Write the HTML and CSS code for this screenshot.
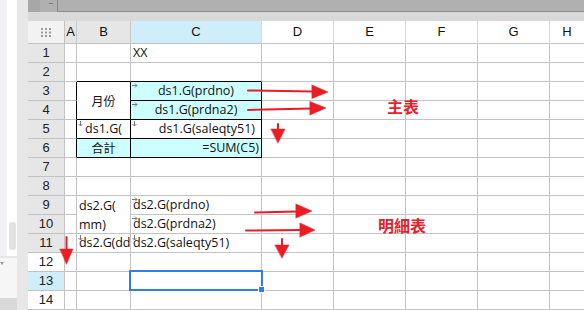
FILE: index.html
```html
<!DOCTYPE html>
<html lang="zh-TW">
<head>
    <meta charset="UTF-8">
    <title>報表設計</title>
    <link rel="stylesheet" href="styles.css">
</head>
<body>
<div class="app">
    <aside class="side">
        <div class="rail"></div>
        <div class="track"><div class="thumb"></div></div>
        <div class="gutter"></div>
        <div class="foot-line"></div>
        <div class="foot"><span class="foot-caret"></span></div>
        <div class="foot-bottom"></div>
    </aside>

    <main class="main">
        <div class="toolbar">
            <div class="tb-btn"></div>
            <div class="tb-gap"><span class="tb-tick"></span></div>
            <div class="tb-box"></div>
        </div>
        <div class="band"></div>

        <div class="sheet">
            <!-- column headers -->
            <div class="corner">
                <svg width="10" height="9" viewBox="0 0 10 9">
                    <g fill="#9b9b9b">
                        <rect x="0" y="0" width="2" height="2"/><rect x="4" y="0" width="2" height="2"/><rect x="8" y="0" width="2" height="2"/>
                        <rect x="0" y="3.5" width="2" height="2"/><rect x="4" y="3.5" width="2" height="2"/><rect x="8" y="3.5" width="2" height="2"/>
                        <rect x="0" y="7" width="2" height="2"/><rect x="4" y="7" width="2" height="2"/><rect x="8" y="7" width="2" height="2"/>
                    </g>
                </svg>
            </div>
            <div class="ch used">A</div>
            <div class="ch used">B</div>
            <div class="ch active">C</div>
            <div class="ch">D</div>
            <div class="ch">E</div>
            <div class="ch">F</div>
            <div class="ch">G</div>
            <div class="ch last">H</div>

            <!-- row 1 -->
            <div class="rh">1</div>
            <div class="c"></div>
            <div class="c"></div>
            <div class="c">XX</div>
            <div class="c"></div><div class="c"></div><div class="c"></div><div class="c"></div><div class="c last"></div>

            <!-- row 2 -->
            <div class="rh">2</div>
            <div class="c"></div>
            <div class="c bb"></div>
            <div class="c bb"></div>
            <div class="c"></div><div class="c"></div><div class="c"></div><div class="c"></div><div class="c last"></div>

            <!-- row 3 -->
            <div class="rh">3</div>
            <div class="c br"></div>
            <div class="c blk ctr span2 cjk">月份</div>
            <div class="c blk cyan ctr">
                <svg class="mk" width="6" height="5" viewBox="0 0 6 5"><path d="M0 2.5H5M3 0.5L5 2.5L3 4.5" fill="none" stroke="#7a7a7a"/></svg>
                ds1.G(prdno)
            </div>
            <div class="c"></div><div class="c"></div><div class="c"></div><div class="c"></div><div class="c last"></div>

            <!-- row 4 -->
            <div class="rh">4</div>
            <div class="c br"></div>
            <div class="c blk cyan ctr">
                <svg class="mk" width="6" height="5" viewBox="0 0 6 5"><path d="M0 2.5H5M3 0.5L5 2.5L3 4.5" fill="none" stroke="#7a7a7a"/></svg>
                ds1.G(prdna2)
            </div>
            <div class="c"></div><div class="c"></div><div class="c"></div><div class="c"></div><div class="c last"></div>

            <!-- row 5 -->
            <div class="rh">5</div>
            <div class="c br"></div>
            <div class="c blk ctr">
                <svg class="mk" width="5" height="6" viewBox="0 0 5 6"><path d="M2.5 0V5M0.5 3L2.5 5L4.5 3" fill="none" stroke="#7a7a7a"/></svg>
                ds1.G(
            </div>
            <div class="c blk rt pad-r">
                <svg class="mk" width="5" height="6" viewBox="0 0 5 6"><path d="M2.5 0V5M0.5 3L2.5 5L4.5 3" fill="none" stroke="#7a7a7a"/></svg>
                ds1.G(saleqty51)
            </div>
            <div class="c"></div><div class="c"></div><div class="c"></div><div class="c"></div><div class="c last"></div>

            <!-- row 6 -->
            <div class="rh">6</div>
            <div class="c br"></div>
            <div class="c blk cyan ctr cjk">合計</div>
            <div class="c blk cyan rt">=SUM(C5)</div>
            <div class="c"></div><div class="c"></div><div class="c"></div><div class="c"></div><div class="c last"></div>

            <!-- row 7 -->
            <div class="rh">7</div>
            <div class="c"></div><div class="c"></div><div class="c"></div>
            <div class="c"></div><div class="c"></div><div class="c"></div><div class="c"></div><div class="c last"></div>

            <!-- row 8 -->
            <div class="rh">8</div>
            <div class="c"></div><div class="c"></div><div class="c"></div>
            <div class="c"></div><div class="c"></div><div class="c"></div><div class="c"></div><div class="c last"></div>

            <!-- row 9 -->
            <div class="rh">9</div>
            <div class="c"></div>
            <div class="c span2 wrap">ds2.G(<br>mm)</div>
            <div class="c">
                <svg class="mk" width="6" height="5" viewBox="0 0 6 5"><path d="M0 2.5H5M3 0.5L5 2.5L3 4.5" fill="none" stroke="#7a7a7a"/></svg>
                ds2.G(prdno)
            </div>
            <div class="c"></div><div class="c"></div><div class="c"></div><div class="c"></div><div class="c last"></div>

            <!-- row 10 -->
            <div class="rh">10</div>
            <div class="c"></div>
            <div class="c">
                <svg class="mk" width="6" height="5" viewBox="0 0 6 5"><path d="M0 2.5H5M3 0.5L5 2.5L3 4.5" fill="none" stroke="#7a7a7a"/></svg>
                ds2.G(prdna2)
            </div>
            <div class="c"></div><div class="c"></div><div class="c"></div><div class="c"></div><div class="c last"></div>

            <!-- row 11 -->
            <div class="rh">11</div>
            <div class="c"></div>
            <div class="c tight">
                <svg class="mk" width="5" height="6" viewBox="0 0 5 6"><path d="M2.5 0V5M0.5 3L2.5 5L4.5 3" fill="none" stroke="#7a7a7a"/></svg>
                ds2.G(dd
            </div>
            <div class="c">
                <svg class="mk" width="5" height="6" viewBox="0 0 5 6"><path d="M2.5 0V5M0.5 3L2.5 5L4.5 3" fill="none" stroke="#7a7a7a"/></svg>
                ds2.G(saleqty51)
            </div>
            <div class="c"></div><div class="c"></div><div class="c"></div><div class="c"></div><div class="c last"></div>

            <!-- row 12 -->
            <div class="rh plain">12</div>
            <div class="c"></div><div class="c"></div><div class="c"></div>
            <div class="c"></div><div class="c"></div><div class="c"></div><div class="c"></div><div class="c last"></div>

            <!-- row 13 -->
            <div class="rh active">13</div>
            <div class="c"></div><div class="c"></div>
            <div class="c"><div class="sel"></div></div>
            <div class="c"></div><div class="c"></div><div class="c"></div><div class="c"></div><div class="c last"></div>

            <!-- row 14 -->
            <div class="rh plain">14</div>
            <div class="c"></div><div class="c"></div><div class="c"></div>
            <div class="c"></div><div class="c"></div><div class="c"></div><div class="c"></div><div class="c last"></div>
        </div>
    </main>

    <!-- hand drawn annotations on top of the sheet -->
    <svg class="marks" width="584" height="310" viewBox="0 0 584 310">
        <g fill="#ec1c24" stroke="#ec1c24" stroke-width="2" stroke-linecap="round">
            <line x1="248" y1="90.5" x2="314" y2="91.5"/>
            <polygon points="312,85 328,92 312,98.5" stroke-width="0.5"/>
            <line x1="248" y1="110" x2="312" y2="108.5"/>
            <polygon points="310,101.5 326,108 310,115" stroke-width="0.5"/>
            <line x1="278" y1="124" x2="278" y2="130"/>
            <polygon points="271,129 285,129 278,143" stroke-width="0.5"/>

            <line x1="255" y1="212.5" x2="298" y2="211.5"/>
            <polygon points="296,204 312,211 296,218" stroke-width="0.5"/>
            <line x1="246" y1="230.5" x2="302" y2="230"/>
            <polygon points="300,223 315,230 300,237" stroke-width="0.5"/>
            <line x1="282" y1="239" x2="282" y2="246"/>
            <polygon points="275,245 289,245 282,258" stroke-width="0.5"/>

            <line x1="66.5" y1="237" x2="66.5" y2="250"/>
            <polygon points="60,249 73,249 66.5,264" stroke-width="0.5"/>
        </g>
    </svg>
    <span class="note note-main">主表</span>
    <span class="note note-detail">明細表</span>
</div>
</body>
</html>
```

FILE: styles.css
```css
body {
    margin: 0;
    padding: 0;
    background-color: #fff;
    font-family: "Open Sans", "Noto Sans CJK TC", sans-serif;
}
.app {
    position: relative;
    display: flex;
    width: 584px;
    height: 310px;
    overflow: hidden;
}

/* left panel strip */
.side {
    display: grid;
    grid-template-columns: 7px 10px 11px;
    grid-template-rows: 256px 2px 40px 12px;
    flex-shrink: 0;
}
.rail {
    background-color: #f3f3f5;
}
.track {
    background-color: #fff;
}
.thumb {
    width: 7px;
    height: 28px;
    margin: 222px 0 0 2px;
    border-radius: 3px;
    background-color: #e2e2e2;
}
.gutter {
    grid-column: 3;
    grid-row: 1 / -1;
    background-color: #e7e7e7;
}
.foot-line {
    grid-column: 1 / 3;
    background-color: #e6e6e6;
}
.foot {
    grid-column: 1 / 3;
    background-color: #f6f6f6;
    padding-top: 4px;
}
.foot-caret {
    display: block;
    width: 0;
    height: 0;
    border-left: 2px solid transparent;
    border-right: 2px solid transparent;
    border-top: 3px solid #999;
}
.foot-bottom {
    grid-column: 1 / 3;
    background-color: #d9d9d9;
}

/* sheet area */
.main {
    flex: 1;
    display: flex;
    flex-direction: column;
    min-width: 0;
}
.toolbar {
    display: flex;
    height: 14px;
    background-color: #b0b0b0;
}
.tb-btn {
    width: 12px;
    background-color: #a7a7a7;
}
.tb-gap {
    width: 17px;
}
.tb-tick {
    display: block;
    width: 4px;
    height: 1px;
    margin: 3px 0 0 9px;
    background-color: #7c7c7c;
}
.tb-box {
    flex: 1;
    border-left: 1px solid #8a8a8a;
    border-bottom: 1px solid #8e8e8e;
}
.band {
    height: 10px;
    background-color: #d9d9d9;
}

.sheet {
    display: grid;
    grid-template-columns: 37px 12px 54px 131px 72px 72px 72px 72px 1fr;
    grid-template-rows: 23px repeat(14, 19px);
    font-size: 12.5px;
    color: #111;
}
.sheet > div {
    box-sizing: border-box;
    border-right: 1px solid #c3c3c3;
    border-bottom: 1px solid #c3c3c3;
}
.sheet > .last {
    border-right: none;
}

.corner {
    display: flex;
    align-items: center;
    justify-content: center;
    padding-top: 1px;
    background-color: #f2f2f2;
}
.ch {
    font-family: "Liberation Sans", Arial, sans-serif;
    font-size: 13px;
    line-height: 22px;
    text-align: center;
    background-color: #fff;
    border-right-color: #d9d9d9 !important;
}
.ch.used {
    background-color: #e6e6e6;
    border-right-color: #c8c8c8 !important;
}
.ch.active {
    background-color: #d0eef9;
}
.rh {
    font-family: "Liberation Sans", Arial, sans-serif;
    font-size: 13px;
    line-height: 18px;
    text-align: center;
    color: #222;
    background-color: #e6e6e6;
}
.rh.plain {
    background-color: #fff;
}
.rh.active {
    background-color: #d0eef9;
}

/* cells */
.c {
    position: relative;
    padding: 0 2px;
    line-height: 18px;
    white-space: nowrap;
    overflow: hidden;
}
.c.tight {
    padding-right: 0;
    overflow: visible;
    letter-spacing: -0.1px;
}
.ctr {
    text-align: center;
}
.rt {
    text-align: right;
}
.pad-r {
    padding-right: 6px;
}
.cjk {
    font-family: "Noto Sans CJK TC", sans-serif;
    font-size: 12px;
}
.span2 {
    grid-row: span 2;
    display: flex;
    flex-direction: column;
    justify-content: center;
    align-items: center;
}
.span2.wrap {
    align-items: flex-start;
    line-height: 19px;
}
.cyan {
    background-color: #ccffff;
}
.sheet > .blk {
    border-right-color: #000;
    border-bottom-color: #000;
}
.sheet > .bb {
    border-bottom-color: #000;
}
.sheet > .br {
    border-right-color: #000;
}
.mk {
    position: absolute;
    top: 1px;
    left: 1px;
}

/* selected cell */
.c:has(.sel) {
    overflow: visible;
}
.sel {
    position: absolute;
    top: -2px;
    left: -2px;
    right: -2px;
    bottom: -1px;
    border: 2px solid #2f7fe3;
    z-index: 2;
}
.sel::after {
    content: "";
    position: absolute;
    right: -4px;
    bottom: -4px;
    width: 5px;
    height: 5px;
    background-color: #2f7fe3;
    border: 1px solid #fff;
}

/* annotations */
.marks {
    position: absolute;
    top: 0;
    left: 0;
    pointer-events: none;
}
.note {
    position: absolute;
    font-family: "Noto Sans CJK TC", sans-serif;
    font-weight: bold;
    font-size: 16px;
    line-height: 16px;
    color: #e8202a;
}
.note-main {
    top: 98px;
    left: 387px;
}
.note-detail {
    top: 217px;
    left: 378px;
}
```
